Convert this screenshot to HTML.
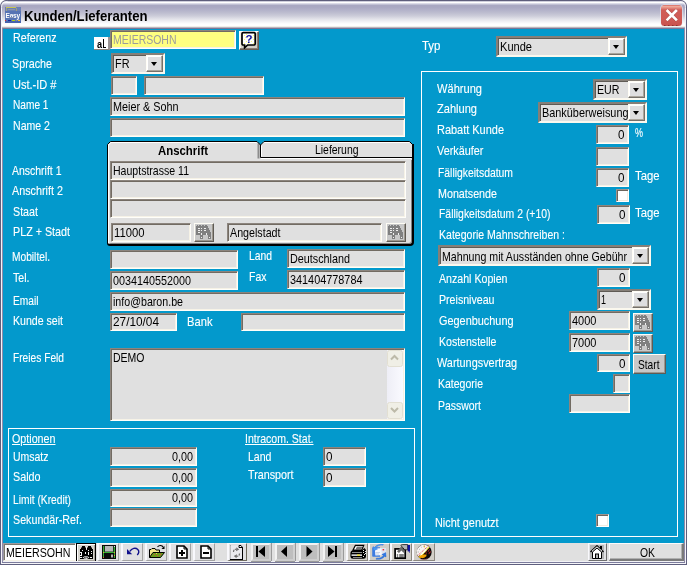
<!DOCTYPE html><html><head><meta charset="utf-8"><title>Kunden/Lieferanten</title><style>
html,body{margin:0;padding:0;}
body{width:687px;height:565px;overflow:hidden;background:#fff;font-family:"Liberation Sans",sans-serif;font-size:13px;position:relative;}
.a{position:absolute;}
.t{position:absolute;white-space:nowrap;line-height:14px;height:14px;transform-origin:0 0;color:#fff;-webkit-text-stroke:0.12px #fff;}
.k{color:#000;-webkit-text-stroke:0;}
.f{position:absolute;box-sizing:border-box;background:#e0e0e0;border-style:solid;border-width:1px;border-color:#8c857e #fffefa #fffefa #8c857e;box-shadow:inset 1px 1px 0 #726b62, inset -1px -1px 0 #f6f2e6;}
.c{position:absolute;box-sizing:border-box;background:#e0e0e0;border-style:solid;border-width:2px;border-color:#857f78 #fbf8ee #fbf8ee #857f78;box-shadow:inset 1px 1px 0 #5f5b55;}
.db{position:absolute;box-sizing:border-box;background:#dededf;border-style:solid;border-width:1px;border-color:#fffdf5 #74706a #74706a #fffdf5;box-shadow:inset -1px -1px 0 #aaa59c, inset 1px 1px 0 #fff;}
.db:after{content:"";position:absolute;left:50%;top:50%;margin:-1.5px 0 0 -3.5px;border-style:solid;border-color:#000 transparent transparent transparent;border-width:4px 3.5px 0 3.5px;}
.btn{position:absolute;box-sizing:border-box;background:#e0e0e0;border-style:solid;border-width:1px;border-color:#fffdf5 #5f5b55 #5f5b55 #fffdf5;box-shadow:inset -1px -1px 0 #9c978e;}
.gb{position:absolute;box-sizing:border-box;border:1px solid #fff;}
.tb{position:absolute;box-sizing:border-box;top:543px;height:18px;background:#e0e0e2;border-style:solid;border-width:1px 1px 1px 2px;border-color:#f8f8fa #a2a2a2 #a2a2a2 #f8f8fc;}
.nv{position:absolute;box-sizing:border-box;top:543px;height:18px;width:20px;background:#bebebe;border-style:solid;border-width:2px 2px 2px 2px;border-color:#f2f2f2 #d0d0d0 #cdcdcd #f2f2f2;box-shadow:1px 0 0 #9a9a9a, 0 1px 0 #9a9a9a;}
</style></head><body><div id="w" style="position:absolute;left:0;top:0;width:687px;height:565px;will-change:transform;">
<div class="a" style="left:0;top:0;width:687px;height:565px;background:#f4f4f8;border-radius:8px 8px 0 0;"></div>
<div class="a" style="left:0;top:0;width:687px;height:29px;border-radius:8px 8px 0 0;background:linear-gradient(#5e5e7c 0,#5e5e7c 1px,#cfcfdc 1px,#cfcfdc 2px,#ffffff 2px,#ffffff 3px,#dcdce8 3.5px,#c0c0d4 4.5px,#a9a8c2 5.5px,#a9a8c2 7px,#b1b0c8 9.5px,#bebed0 13px,#cdcdda 16px,#e2e2e9 19px,#f4f4f7 22px,#ffffff 24px,#ffffff 26px,#f0eee8 26px,#f0eee8 27px,#b8b4c0 27px,#b8b4c0 28px,#7a7696 28px,#7a7696 29px);"></div>
<svg class="a" style="left:0;top:0" width="687" height="10" viewBox="0 0 687 10"><path d="M0.5 9 V7 Q0.5 0.5 7 0.5 M680 0.5 Q686.5 0.5 686.5 7 V9" fill="none" stroke="#5e5e7c" stroke-width="1"/><path d="M1.5 9 V7.5 Q1.5 1.6 7.5 1.6 M679.5 1.6 Q685.5 1.6 685.5 7.5 V9" fill="none" stroke="#f4f4fa" stroke-width="1"/></svg>
<div class="a" style="left:1px;top:8px;width:1px;height:21px;background:#f4f4fa;"></div>
<div class="a" style="left:685px;top:8px;width:1px;height:21px;background:#f4f4fa;"></div>
<div class="a" style="left:0;top:7px;width:1px;height:558px;background:#5f5f7e;"></div>
<div class="a" style="left:2px;top:28px;width:1px;height:535px;background:#8f8aa8;"></div>
<div class="a" style="left:686px;top:7px;width:1px;height:558px;background:#5f5f7e;"></div>
<div class="a" style="left:684px;top:28px;width:1px;height:535px;background:#8f8aa8;"></div>
<div class="a" style="left:0;top:564px;width:687px;height:1px;background:#5f5f7e;"></div>
<div class="a" style="left:2px;top:562px;width:683px;height:1px;background:#7c7c9c;"></div>
<div class="a" style="left:3px;top:29px;width:681px;height:514px;background:#0399cc;"></div>
<div class="a" style="left:3px;top:543px;width:681px;height:19px;background:#e0e0e0;"></div>
<div class="a" style="left:5px;top:7px;width:16px;height:16px;background:#5673b4;overflow:hidden;"><div class="a" style="left:0;top:0;width:16px;height:4px;background:#6a80b4;"></div><div class="a" style="left:1px;top:0;width:10px;height:1px;background:#c4c452;"></div><div class="a" style="left:1px;top:1px;width:1px;height:3px;background:#a0a080;"></div><div class="a" style="left:11px;top:1px;width:1px;height:3px;background:#a0a080;"></div><div class="a" style="left:3px;top:2px;width:7px;height:1px;background:#8c94a8;"></div><div class="a" style="left:0.5px;top:4.5px;font:bold 6.5px/7px 'Liberation Sans',sans-serif;color:#fff;letter-spacing:-0.2px;">Easy</div><div class="a" style="left:4px;top:10px;width:5px;height:1px;background:#8c98b4;"></div><div class="a" style="left:0;top:13px;width:1px;height:2px;background:#d82a2a;"></div><div class="a" style="left:3px;top:13px;width:3px;height:1px;background:#1428a4;"></div><div class="a" style="left:7px;top:13px;width:3px;height:1px;background:#b0d014;"></div><div class="a" style="left:11px;top:13px;width:1px;height:1px;background:#909090;"></div><div class="a" style="left:13px;top:13px;width:2px;height:1px;background:#f0c028;"></div><div class="a" style="left:0;top:14px;width:16px;height:2px;background:#4864ac;"></div></div>
<div class="t k" style="left:24.4px;top:7px;font-size:14.5px;line-height:18px;height:18px;transform:scaleX(0.9070);font-weight:bold;">Kunden/Lieferanten</div>
<div class="a" style="left:661px;top:5px;width:21px;height:21px;border-radius:3.5px;background:linear-gradient(#d8685f 0,#eea898 1.5px,#e58a7e 3px,#d05d57 5px,#cf5a55 14px,#c9514d 21px);box-sizing:border-box;box-shadow:0 0 0 0.6px rgba(236,236,246,.9);"><svg class="a" style="left:0;top:0" width="21" height="21" viewBox="0 0 21 21"><path d="M5.6 5 L15.9 15.4 M15.9 5 L5.6 15.4" stroke="#6a1c18" stroke-width="3.6" stroke-linecap="butt" opacity=".35"/><path d="M5.6 5 L15.9 15.4 M15.9 5 L5.6 15.4" stroke="#fff" stroke-width="2.7" stroke-linecap="butt"/><path d="M3 20.5 H18" stroke="#7a2a26" stroke-width="1" stroke-dasharray="1.5 2.5" opacity=".8"/></svg></div>
<div class="gb" style="left:8px;top:428px;width:407px;height:109px;"></div>
<div class="gb" style="left:421px;top:71px;width:257px;height:466px;"></div>
<div class="t " style="left:13.4px;top:31px;transform:scaleX(0.8246);">Referenz</div>
<div class="t " style="left:12.4px;top:57px;transform:scaleX(0.8261);">Sprache</div>
<div class="t " style="left:13.4px;top:78px;transform:scaleX(0.8480);">Ust.-ID #</div>
<div class="t " style="left:13.4px;top:98px;transform:scaleX(0.7797);">Name 1</div>
<div class="t " style="left:13.4px;top:119px;transform:scaleX(0.8126);">Name 2</div>
<div class="t " style="left:12.4px;top:164px;transform:scaleX(0.8059);">Anschrift 1</div>
<div class="t " style="left:12.4px;top:184px;transform:scaleX(0.8303);">Anschrift 2</div>
<div class="t " style="left:13.4px;top:205px;transform:scaleX(0.8235);">Staat</div>
<div class="t " style="left:13.4px;top:225px;transform:scaleX(0.8259);">PLZ + Stadt</div>
<div class="t " style="left:12.4px;top:250px;transform:scaleX(0.7848);">Mobiltel.</div>
<div class="t " style="left:13.4px;top:271px;transform:scaleX(0.8154);">Tel.</div>
<div class="t " style="left:13.4px;top:294px;transform:scaleX(0.7842);">Email</div>
<div class="t " style="left:13.4px;top:314px;transform:scaleX(0.8138);">Kunde seit</div>
<div class="t " style="left:13.4px;top:351px;transform:scaleX(0.7842);">Freies Feld</div>
<div class="t " style="left:249.4px;top:249px;transform:scaleX(0.7952);">Land</div>
<div class="t " style="left:249.4px;top:270px;transform:scaleX(0.8075);">Fax</div>
<div class="t " style="left:187.4px;top:315px;transform:scaleX(0.8603);">Bank</div>
<div class="t " style="left:13.4px;top:450px;transform:scaleX(0.8057);">Umsatz</div>
<div class="t " style="left:13.4px;top:470px;transform:scaleX(0.8271);">Saldo</div>
<div class="t " style="left:13.4px;top:493px;transform:scaleX(0.7871);">Limit (Kredit)</div>
<div class="t " style="left:13.4px;top:513px;transform:scaleX(0.8231);">Sekundär-Ref.</div>
<div class="t " style="left:248.4px;top:450px;transform:scaleX(0.8125);">Land</div>
<div class="t " style="left:248.4px;top:468px;transform:scaleX(0.8249);">Transport</div>
<div class="t " style="left:422.4px;top:39px;transform:scaleX(0.8823);">Typ</div>
<div class="t " style="left:437.4px;top:82px;transform:scaleX(0.8531);">Währung</div>
<div class="t " style="left:437.4px;top:102px;transform:scaleX(0.8513);">Zahlung</div>
<div class="t " style="left:437.4px;top:123px;transform:scaleX(0.8426);">Rabatt Kunde</div>
<div class="t " style="left:437.4px;top:144px;transform:scaleX(0.8355);">Verkäufer</div>
<div class="t " style="left:438.2px;top:166px;transform:scaleX(0.7984);">Fälligkeitsdatum</div>
<div class="t " style="left:438.2px;top:187px;transform:scaleX(0.8245);">Monatsende</div>
<div class="t " style="left:438.9px;top:207px;transform:scaleX(0.8016);">Fälligkeitsdatum 2 (+10)</div>
<div class="t " style="left:438.9px;top:228px;transform:scaleX(0.8109);">Kategorie Mahnschreiben :</div>
<div class="t " style="left:438.7px;top:272px;transform:scaleX(0.8170);">Anzahl Kopien</div>
<div class="t " style="left:438.9px;top:293px;transform:scaleX(0.8169);">Preisniveau</div>
<div class="t " style="left:438.9px;top:314px;transform:scaleX(0.8378);">Gegenbuchung</div>
<div class="t " style="left:438.9px;top:335px;transform:scaleX(0.8118);">Kostenstelle</div>
<div class="t " style="left:437.4px;top:356px;transform:scaleX(0.8367);">Wartungsvertrag</div>
<div class="t " style="left:438.2px;top:377px;transform:scaleX(0.8085);">Kategorie</div>
<div class="t " style="left:438.2px;top:399px;transform:scaleX(0.8042);">Passwort</div>
<div class="t " style="left:435.4px;top:516px;transform:scaleX(0.8369);">Nicht genutzt</div>
<div class="t " style="left:635.4px;top:126px;transform:scaleX(0.6919);">%</div>
<div class="t " style="left:635.4px;top:169px;transform:scaleX(0.8687);">Tage</div>
<div class="t " style="left:635.4px;top:206px;transform:scaleX(0.8687);">Tage</div>
<div class="t " style="left:12.4px;top:432px;transform:scaleX(0.8244);text-decoration:underline;text-underline-offset:1px;">Optionen</div>
<div class="t " style="left:245.4px;top:432px;transform:scaleX(0.8102);text-decoration:underline;text-underline-offset:1px;">Intracom. Stat.</div>
<div class="a" style="left:107px;top:159px;width:307px;height:87px;background:#e0e0e0;border:solid #000;border-width:0 2px 2px 1px;box-sizing:border-box;border-radius:0 0 4px 3px;box-shadow:inset 1px 0 0 #fff, inset -1px -1px 0 #808080;"></div>
<svg class="a" style="left:106px;top:140px" width="310" height="20" viewBox="106 140 310 20"><path d="M107.5 160 V144.5 L110.5 141.5 H257 L260.5 145 L264 141.5 H409.5 L413 145 V160 Z" fill="#e0e0e0"/><path d="M258.5 143.5 V158.5" stroke="#8c8c8c" stroke-width="2" fill="none"/><path d="M108.5 160 V145 L111 142.5 H256.5 M264.5 142.5 H409 M261.5 146 V156.5 M261 158.5 H411" stroke="#fff" stroke-width="1" fill="none"/><path d="M107.5 160 V144.5 L110.5 141.5 H257 L260.5 145 L264 141.5 H409.5 L412.5 144.5" stroke="#000" stroke-width="1" fill="none"/><path d="M413 144 V160" stroke="#000" stroke-width="2" fill="none"/><path d="M260.5 145 V157.5 H412" stroke="#000" stroke-width="1" fill="none"/></svg>
<div class="t k" style="left:158.4px;top:144px;transform:scaleX(0.8762);font-weight:bold;">Anschrift</div>
<div class="t k" style="left:315.4px;top:143px;transform:scaleX(0.8023);">Lieferung</div>
<div class="f" style="left:111px;top:76px;width:26px;height:19px;"></div>
<div class="f" style="left:144px;top:76px;width:120px;height:19px;"></div>
<div class="f" style="left:110px;top:97px;width:295px;height:19px;"></div>
<div class="t k" style="left:113.4px;top:100px;transform:scaleX(0.8316);">Meier &amp; Sohn</div>
<div class="f" style="left:110px;top:118px;width:295px;height:19px;"></div>
<div class="f" style="left:110px;top:161px;width:296px;height:19px;"></div>
<div class="t k" style="left:113.4px;top:164px;transform:scaleX(0.8111);">Hauptstrasse 11</div>
<div class="f" style="left:110px;top:180px;width:296px;height:19px;"></div>
<div class="f" style="left:110px;top:199px;width:296px;height:19px;"></div>
<div class="f" style="left:111px;top:223px;width:80px;height:19px;"></div>
<div class="t k" style="left:114.4px;top:226px;transform:scaleX(0.8668);">11000</div>
<div class="f" style="left:227px;top:223px;width:155px;height:19px;"></div>
<div class="t k" style="left:230.4px;top:226px;transform:scaleX(0.8220);">Angelstadt</div>
<div class="f" style="left:110px;top:250px;width:128px;height:19px;"></div>
<div class="f" style="left:287px;top:249px;width:118px;height:19px;"></div>
<div class="t k" style="left:290.4px;top:252px;transform:scaleX(0.8301);">Deutschland</div>
<div class="f" style="left:110px;top:271px;width:128px;height:19px;"></div>
<div class="t k" style="left:113.4px;top:274px;transform:scaleX(0.8298);">0034140552000</div>
<div class="f" style="left:287px;top:270px;width:118px;height:19px;"></div>
<div class="t k" style="left:290.4px;top:273px;transform:scaleX(0.8356);">341404778784</div>
<div class="f" style="left:110px;top:292px;width:295px;height:19px;"></div>
<div class="t k" style="left:113.4px;top:295px;transform:scaleX(0.8189);">info@baron.be</div>
<div class="f" style="left:110px;top:313px;width:67px;height:18px;"></div>
<div class="t k" style="left:113.4px;top:315px;transform:scaleX(0.9089);">27/10/04</div>
<div class="f" style="left:241px;top:313px;width:164px;height:18px;"></div>
<div class="f" style="left:110px;top:447px;width:87px;height:19px;"></div>
<div class="t k" style="left:171.9px;top:450px;transform:scaleX(0.8296);">0,00</div>
<div class="f" style="left:110px;top:468px;width:87px;height:19px;"></div>
<div class="t k" style="left:171.9px;top:470.5px;transform:scaleX(0.8296);">0,00</div>
<div class="f" style="left:110px;top:489px;width:87px;height:18px;"></div>
<div class="t k" style="left:171.9px;top:491px;transform:scaleX(0.8296);">0,00</div>
<div class="f" style="left:110px;top:508px;width:87px;height:19px;"></div>
<div class="f" style="left:323px;top:447px;width:43px;height:19px;"></div>
<div class="t k" style="left:326.4px;top:450px;transform:scaleX(0.8985);">0</div>
<div class="f" style="left:323px;top:468px;width:43px;height:19px;"></div>
<div class="t k" style="left:326.4px;top:471px;transform:scaleX(0.8985);">0</div>
<div class="f" style="left:596px;top:125px;width:33px;height:19px;"></div>
<div class="t k" style="left:618.4px;top:127.5px;transform:scaleX(0.8985);">0</div>
<div class="f" style="left:596px;top:147px;width:33px;height:19px;"></div>
<div class="f" style="left:596px;top:168px;width:33px;height:19px;"></div>
<div class="t k" style="left:618.4px;top:170.5px;transform:scaleX(0.8985);">0</div>
<div class="f" style="left:597px;top:205px;width:33px;height:19px;"></div>
<div class="t k" style="left:619.4px;top:207.5px;transform:scaleX(0.8985);">0</div>
<div class="f" style="left:597px;top:268px;width:33px;height:19px;"></div>
<div class="t k" style="left:619.4px;top:270.5px;transform:scaleX(0.8985);">0</div>
<div class="f" style="left:569px;top:311px;width:61px;height:19px;"></div>
<div class="t k" style="left:572.4px;top:313.5px;transform:scaleX(0.8471);">4000</div>
<div class="f" style="left:569px;top:333px;width:61px;height:19px;"></div>
<div class="t k" style="left:572.4px;top:335.5px;transform:scaleX(0.8471);">7000</div>
<div class="f" style="left:597px;top:354px;width:33px;height:18px;"></div>
<div class="t k" style="left:619.4px;top:356.5px;transform:scaleX(0.8985);">0</div>
<div class="f" style="left:613px;top:374px;width:17px;height:19px;"></div>
<div class="f" style="left:569px;top:394px;width:61px;height:19px;"></div>
<div class="f" style="left:110px;top:30px;width:126px;height:19px;background:#ffff80;"></div>
<div class="t k" style="left:113.4px;top:33px;transform:scaleX(0.8065);color:#9c9c9c;">MEIERSOHN</div>
<div class="a" style="left:94px;top:37px;width:16px;height:13px;background:#fff;box-sizing:border-box;border-style:solid;border-width:0 2px 1px 0;border-color:#9a9494 #9a9494 #8c8278 #9a9494;"></div>
<div class="t k" style="left:96.6px;top:37px;font-size:10.5px;transform:scaleX(0.8727);font-weight:bold;">a</div>
<div class="a" style="left:103px;top:39px;width:1px;height:9px;background:#000;"></div>
<div class="a" style="left:104px;top:47px;width:2px;height:1px;background:#000;"></div>
<div class="btn" style="left:239px;top:31px;width:20px;height:19px;background:#d4d0c8;border-color:#fff #6a5c54 #6a5c54 #fff;box-shadow:inset -1px -1px 0 #8c8078, inset 1px 1px 0 #f4f0e8;"></div>
<svg class="a" style="left:241px;top:31px" width="16" height="18" viewBox="0 0 16 18"><path d="M2.2 1.6 H13 Q14.2 1.6 14.2 2.8 V12.8 Q14.2 14 13 14 H6.6 L3.6 16.8 L3.6 14 H2.2 Q1 14 1 12.8 V2.8 Q1 1.6 2.2 1.6 Z" fill="#fff" stroke="#000" stroke-width="1.7"/><path d="M3 4h1v1h-1zM3 8h1v1h-1zM3 12h1v1h-1zM5 3h1v1h-1zM5 10h1v1h-1zM12 4h1v1h-1zM12 8h1v1h-1zM12 12h1v1h-1zM10 10h1v1h-1zM7 12h1v1h-1zM4 6h1v1h-1zM11 6h1v1h-1z" fill="#ffff70"/><text x="8" y="12" font-family="Liberation Sans" font-weight="bold" font-size="11.5" text-anchor="middle" fill="#10109c">?</text></svg>
<div class="c" style="left:111px;top:53px;width:54px;height:21px;"></div>
<div class="db" style="left:146px;top:55px;width:17px;height:17px;"></div>
<div class="t k" style="left:114.9px;top:57px;transform:scaleX(0.8360);">FR</div>
<div class="c" style="left:496px;top:36px;width:131px;height:21px;"></div>
<div class="db" style="left:608px;top:38px;width:17px;height:17px;"></div>
<div class="t k" style="left:499.9px;top:40px;transform:scaleX(0.8512);">Kunde</div>
<div class="c" style="left:593px;top:79px;width:54px;height:21px;"></div>
<div class="db" style="left:628px;top:81px;width:17px;height:17px;"></div>
<div class="t k" style="left:596.9px;top:83px;transform:scaleX(0.8196);">EUR</div>
<div class="c" style="left:538px;top:102px;width:109px;height:21px;"></div>
<div class="db" style="left:628px;top:104px;width:17px;height:17px;"></div>
<div class="t k" style="left:541.9px;top:106px;transform:scaleX(0.8369);">Banküberweisung</div>
<div class="c" style="left:438px;top:245px;width:213px;height:21px;"></div>
<div class="db" style="left:632px;top:247px;width:17px;height:17px;"></div>
<div class="t k" style="left:441.9px;top:249.5px;transform:scaleX(0.8178);">Mahnung mit Ausständen ohne Gebühr</div>
<div class="c" style="left:597px;top:289px;width:54px;height:21px;"></div>
<div class="db" style="left:632px;top:291px;width:17px;height:17px;"></div>
<div class="t k" style="left:600.9px;top:293px;transform:scaleX(0.6911);">1</div>
<div class="a" style="left:616px;top:189px;width:13px;height:13px;background:#fff;box-sizing:border-box;border-style:solid;border-width:1px;border-color:#a0948e #fff #fff #a0948e;box-shadow:inset 1px 1px 0 #6e665e, inset -1px -1px 0 #f0ece0;"></div>
<div class="a" style="left:596px;top:514px;width:13px;height:13px;background:#fff;box-sizing:border-box;border-style:solid;border-width:1px;border-color:#a0948e #fff #fff #a0948e;box-shadow:inset 1px 1px 0 #6e665e, inset -1px -1px 0 #f0ece0;"></div>
<div class="btn" style="left:194px;top:223px;width:20px;height:19px;background:#c8c8c8;"></div>
<svg class="a" style="left:194px;top:223px" width="20" height="19" viewBox="0 0 20 19"><path d="M2 3h1v-1h1v1h1v-1h2v1h1v-1h2v1h1v-1h2v1h1v9h-12z" fill="#808080"/><path d="M4 5h2v1h-2zM4 7h2v1h-2zM4 9h2v1h-2zM7 5h1v1h-1zM7 7h1v1h-1zM10 5h2v1h-2zM10 7h2v1h-2z" fill="#f0f0f0"/><path d="M8 5h2v3h4v-3h1v2h1v2h1v7h-3v-4h-5v4h-3v-7h2z" fill="#808080"/><path d="M7 10h1v2h-1zM12 10h1v2h-1zM7 14h1v1h-1zM15 14h1v1h-1z" fill="#f0f0f0"/></svg>
<div class="btn" style="left:386px;top:223px;width:20px;height:19px;background:#c8c8c8;"></div>
<svg class="a" style="left:386px;top:223px" width="20" height="19" viewBox="0 0 20 19"><path d="M2 3h1v-1h1v1h1v-1h2v1h1v-1h2v1h1v-1h2v1h1v9h-12z" fill="#808080"/><path d="M4 5h2v1h-2zM4 7h2v1h-2zM4 9h2v1h-2zM7 5h1v1h-1zM7 7h1v1h-1zM10 5h2v1h-2zM10 7h2v1h-2z" fill="#f0f0f0"/><path d="M8 5h2v3h4v-3h1v2h1v2h1v7h-3v-4h-5v4h-3v-7h2z" fill="#808080"/><path d="M7 10h1v2h-1zM12 10h1v2h-1zM7 14h1v1h-1zM15 14h1v1h-1z" fill="#f0f0f0"/></svg>
<div class="btn" style="left:633px;top:313px;width:20px;height:19px;background:#c8c8c8;"></div>
<svg class="a" style="left:633px;top:313px" width="20" height="19" viewBox="0 0 20 19"><path d="M2 3h1v-1h1v1h1v-1h2v1h1v-1h2v1h1v-1h2v1h1v9h-12z" fill="#808080"/><path d="M4 5h2v1h-2zM4 7h2v1h-2zM4 9h2v1h-2zM7 5h1v1h-1zM7 7h1v1h-1zM10 5h2v1h-2zM10 7h2v1h-2z" fill="#f0f0f0"/><path d="M8 5h2v3h4v-3h1v2h1v2h1v7h-3v-4h-5v4h-3v-7h2z" fill="#808080"/><path d="M7 10h1v2h-1zM12 10h1v2h-1zM7 14h1v1h-1zM15 14h1v1h-1z" fill="#f0f0f0"/></svg>
<div class="btn" style="left:633px;top:334px;width:20px;height:19px;background:#c8c8c8;"></div>
<svg class="a" style="left:633px;top:334px" width="20" height="19" viewBox="0 0 20 19"><path d="M2 3h1v-1h1v1h1v-1h2v1h1v-1h2v1h1v-1h2v1h1v9h-12z" fill="#808080"/><path d="M4 5h2v1h-2zM4 7h2v1h-2zM4 9h2v1h-2zM7 5h1v1h-1zM7 7h1v1h-1zM10 5h2v1h-2zM10 7h2v1h-2z" fill="#f0f0f0"/><path d="M8 5h2v3h4v-3h1v2h1v2h1v7h-3v-4h-5v4h-3v-7h2z" fill="#808080"/><path d="M7 10h1v2h-1zM12 10h1v2h-1zM7 14h1v1h-1zM15 14h1v1h-1z" fill="#f0f0f0"/></svg>
<div class="btn" style="left:633px;top:354px;width:33px;height:20px;background:#c8c8c8;"></div>
<div class="t k" style="left:638.4px;top:358px;transform:scaleX(0.7827);">Start</div>
<div class="f" style="left:110px;top:348px;width:295px;height:73px;"></div>
<div class="t k" style="left:112.9px;top:351px;transform:scaleX(0.8077);">DEMO</div>
<div class="a" style="left:387px;top:350px;width:16px;height:69px;background:linear-gradient(90deg,#eeeef6,#fafaff);"></div>
<svg class="a" style="left:387px;top:350px" width="16" height="17" viewBox="0 0 16 17"><rect x="0.5" y="0.5" width="15" height="16" rx="2" fill="#f0efe6" stroke="#e2dfd2"/><path d="M4 9.5 L7.5 6 L11 9.5" fill="none" stroke="#bdbaa9" stroke-width="2"/></svg>
<svg class="a" style="left:387px;top:402px" width="16" height="17" viewBox="0 0 16 17"><rect x="0.5" y="0.5" width="15" height="16" rx="2" fill="#f0efe6" stroke="#e2dfd2"/><path d="M4 6 L7.5 9.5 L11 6" fill="none" stroke="#bdbaa9" stroke-width="2"/></svg>
<div class="a" style="left:3px;top:543px;width:73px;height:18px;background:#fff;box-sizing:border-box;border-style:solid;border-width:1px;border-color:#9c9ca2 #fffefa #f4f0e4 #9c9ca2;box-shadow:inset 1px 1px 0 #7c786e;"></div>
<div class="t k" style="left:6.4px;top:546px;transform:scaleX(0.8192);">MEIERSOHN</div>
<div class="a" style="left:76px;top:543px;width:20px;height:19px;background:#d6d4ce;border:1px solid #000;box-sizing:border-box;box-shadow:inset 1px 1px 0 #fff, inset -1px -1px 0 #a8a49c;"></div>
<svg class="a" style="left:76px;top:543px" width="20" height="19" viewBox="0 0 20 19"><path d="M6 3h3v1.5h1v2.5h1v-2.5h1v-1.5h3v1.5h1v1.5h1v10h-6v-2h-1v2h-6v-10h1v-1.5h1z" fill="#000"/><path d="M6 7h1v1h-1zM12 7h1v1h-1zM9 9h1v2h-1zM12 9h1v3h-1zM4 9h2v1h-2zM5 10h1v2h-1zM4 12h2v1h-2zM15 8h1v1h-1zM15 10h1v1h-1zM4 14h2v1h-2zM14 14h2v1h-2zM10 4h1v2h-1z" fill="#f4f4f4"/><path d="M6.5 14.5 L8.5 13.3 H11.5 L13.5 14.5 L11.5 15.7 H8.5 Z" fill="#d8d8d8"/><rect x="8.4" y="14" width="1" height="1" fill="#000"/><rect x="10.6" y="14" width="1" height="1" fill="#000"/></svg>
<div class="a" style="left:3px;top:561px;width:681px;height:1px;background:#f2f2f6;"></div>
<div class="tb" style="left:97px;width:22px;"></div>
<div class="tb" style="left:121px;width:22px;"></div>
<div class="tb" style="left:145px;width:22px;"></div>
<div class="tb" style="left:169px;width:22px;"></div>
<div class="tb" style="left:193px;width:22px;"></div>
<div class="tb" style="left:227px;width:20px;border-right-color:#6e6a5e;border-bottom-color:#6e6a5e;"></div>
<div class="tb" style="left:346px;width:22px;background:#d2cfc8;border-right-color:#8a867e;border-bottom-color:#8a867e;"></div>
<div class="tb" style="left:368px;width:22px;background:#d2cfc8;border-right-color:#8a867e;border-bottom-color:#8a867e;"></div>
<div class="tb" style="left:390px;width:22px;background:#d2cfc8;border-right-color:#8a867e;border-bottom-color:#8a867e;"></div>
<div class="tb" style="left:412px;width:23px;background:#d2cfc8;border-right-color:#8a867e;border-bottom-color:#8a867e;"></div>
<svg class="a" style="left:102px;top:545px" width="14" height="14" viewBox="0 0 14 14"><rect x="0" y="0" width="14" height="14" fill="#0a0a0a"/><rect x="1" y="1" width="12" height="12" fill="#1c3a1c"/><rect x="3" y="1" width="8" height="5.5" fill="#b8b8b8"/><rect x="1" y="1" width="1" height="12" fill="#34b034"/><rect x="12" y="2" width="1" height="11" fill="#34b034"/><rect x="1" y="7" width="12" height="1" fill="#34b034"/><rect x="2" y="8" width="10" height="5" fill="#0a0a0a"/><rect x="9" y="9.5" width="2" height="3" fill="#b4b4b4"/><rect x="1" y="7" width="1" height="1" fill="#e0a030"/><rect x="12" y="7" width="1" height="1" fill="#e0a030"/><rect x="1" y="12" width="1" height="1" fill="#e06030"/><rect x="12" y="10" width="1" height="1" fill="#e0a030"/><rect x="12" y="1" width="1" height="1" fill="#d8d8d8"/></svg>
<svg class="a" style="left:125px;top:545px" width="17" height="14" viewBox="0 0 17 14"><path d="M2 4 L2 9.2 L7.2 9.2 Z" fill="#10108c"/><path d="M4.8 6.4 C6.8 3 10.6 2.4 12.8 4.4 C14.4 6 14 8.4 12.2 10" fill="none" stroke="#10108c" stroke-width="1.4"/></svg>
<svg class="a" style="left:148px;top:544px" width="18" height="15" viewBox="0 0 18 15"><path d="M9.5 3 C11 1 14 1 15.5 3.5" fill="none" stroke="#000" stroke-width="1.1"/><path d="M16.5 2 L16.5 5 L13.5 5 Z" fill="#000"/><path d="M1.5 13.5 V5.5 H3 L4 4.5 H7 L8 6 H11.5 V8" fill="#f4e68c" stroke="#000" stroke-width="1"/><path d="M1.5 13.5 L5 8.5 H16.5 L12.5 13.5 Z" fill="#6c9c1c" stroke="#000" stroke-width="1"/><rect x="6" y="10" width="1" height="1" fill="#e04040"/><rect x="9" y="11" width="1" height="1" fill="#e04040"/><rect x="12" y="10" width="1" height="1" fill="#e04040"/><rect x="8" y="9" width="1" height="1" fill="#e8d040"/></svg>
<svg class="a" style="left:176px;top:545px" width="12" height="14" viewBox="0 0 12 14"><path d="M1 1 H8 L11 4 V13 H1 Z" fill="#fff" stroke="#000" stroke-width="1.6"/><path d="M8 1 V4 H11" fill="none" stroke="#000" stroke-width="1"/><path d="M3 8 H9 M6 5 V11" stroke="#000" stroke-width="2"/></svg>
<svg class="a" style="left:200px;top:545px" width="12" height="14" viewBox="0 0 12 14"><path d="M1 1 H8 L11 4 V13 H1 Z" fill="#fff" stroke="#000" stroke-width="1.6"/><path d="M8 1 V4 H11" fill="none" stroke="#000" stroke-width="1"/><path d="M3 8 H9" stroke="#000" stroke-width="2"/></svg>
<svg class="a" style="left:229px;top:544px" width="16" height="17" viewBox="0 0 16 17"><path d="M1.5 1 V15" stroke="#909090" stroke-width="1"/><path d="M1.5 1.5 H10 L13.5 4 V15.5 H1.5 Z" fill="#eaeaee" stroke="none"/><path d="M1 15.5 H14 M13.5 3 V16" stroke="#000" stroke-width="1"/><path d="M10 3.5 V1.5 H12 L13.5 3.5 Z" fill="#fff" stroke="#000" stroke-width="1"/><path d="M4.5 8 C4.5 5.5 6.5 4.8 8.5 5.2 M10.5 9.5 C10.5 12 8.5 12.6 6.5 12.2" fill="none" stroke="#707070" stroke-width="1.2" stroke-dasharray="2 0.8"/><path d="M7.5 3.2 L10.2 5.5 L7 7.2 Z M7.5 14.2 L4.8 11.9 L8 10.2 Z" fill="#707070"/></svg>
<div class="nv" style="left:251px;"></div>
<svg class="a" style="left:251px;top:543px" width="20" height="19" viewBox="0 0 20 19"><rect x="5" y="3" width="2" height="11" fill="#000"/><path d="M14 3 V14 L7.5 8.5 Z" fill="#000"/></svg>
<div class="nv" style="left:275px;"></div>
<svg class="a" style="left:275px;top:543px" width="20" height="19" viewBox="0 0 20 19"><path d="M12 3 V14 L6 8.5 Z" fill="#000"/></svg>
<div class="nv" style="left:299px;"></div>
<svg class="a" style="left:299px;top:543px" width="20" height="19" viewBox="0 0 20 19"><path d="M7.5 3 V14 L13.5 8.5 Z" fill="#000"/></svg>
<div class="nv" style="left:323px;"></div>
<svg class="a" style="left:323px;top:543px" width="20" height="19" viewBox="0 0 20 19"><path d="M5 3 V14 L11.5 8.5 Z" fill="#000"/><rect x="12" y="3" width="2" height="11" fill="#000"/></svg>
<svg class="a" style="left:346px;top:541px" width="90" height="22" viewBox="346 541 90 22"><path d="M353 550 L355.4 545.4 H363.7 L361.7 550 Z" fill="#fff" stroke="#000" stroke-width="1.2"/><path d="M356.5 547.2 H362 M356 548.8 H361.4" stroke="#000" stroke-width="0.8"/><path d="M350.4 553.5 Q350.4 550 354 550 H362 L364.5 548 L366 550 V556.5 Q366 558.7 363.5 558.7 H353 Q350.4 558.7 350.4 556.5 Z" fill="#000"/><rect x="352" y="552" width="10" height="0.9" fill="#9a9a9a"/><rect x="351.5" y="554.3" width="10.5" height="1.7" fill="#d2d2d2"/><rect x="357" y="554.5" width="3" height="1.3" fill="#f4e020"/><rect x="353" y="557.2" width="9" height="0.8" fill="#a8a8a8"/><path d="M363 550h1v1h-1zM365 551h1v1h-1zM363 552h1v1h-1zM364 554h1v1h-1zM363 556h1v1h-1zM365 553h1v1h-1z" fill="#e8e8e8"/><path d="M372.2 548 Q372.2 547.2 373 547.2 H380 V556.8 H373 Q372.2 556.8 372.2 556 Z" fill="#3f7ce0"/><path d="M374.8 548.6 L386 548 L386.2 555 L375.4 555.6 Z" fill="#f6f8fe"/><path d="M381 548.3 L386 548 L386.2 555 L382 555.3 Z" fill="#dfe3ee"/><rect x="382.6" y="549" width="1.5" height="1.4" fill="#e43434"/><path d="M375.5 552.5 H380 M376 554 H379" stroke="#b8c4dc" stroke-width="0.7"/><path d="M383 545.2 C380 544.6 377 546 375.6 548 L377.6 549 L373.4 551 L373 546.6 L374.6 547.4 C376 545.2 379.6 543.8 383.6 544.6 Z" fill="#4a9cf4" stroke="#2a70e0" stroke-width="0.4"/><path d="M376.4 558.2 C379.6 558.6 382.4 557.2 383.6 555.4 L381.8 554.6 L385.8 552.6 L386 557 L384.6 556.2 C383.2 558.6 379.8 559.8 376 559.2 Z" fill="#2f7ae8" stroke="#1a5cc8" stroke-width="0.4"/><rect x="395.1" y="548.9" width="10.1" height="9.3" fill="#fff" stroke="#000" stroke-width="1.7"/><path d="M396.8 555 H398.2 M399.2 555 H403.8 M396.8 557 H398.2 M399.2 557 H403.8" stroke="#000" stroke-width="1"/><path d="M397 551.6 L401.4 546.2 L405 551.8 L403.4 552.8 L401.4 550.4 L399 553 Z" fill="#6a6a6a"/><path d="M401 545.6 Q401 544.6 402.4 544.6 H407.6 V549.8 H404.6 Z" fill="#b4b4b4" stroke="#000" stroke-width="0.7"/><rect x="407.7" y="545" width="2.3" height="6.4" fill="#10109c"/><path d="M408.6 551.4 L410 551.4 L410 553 Z" fill="#10109c"/><circle cx="424.2" cy="552.1" r="7.5" fill="#0c0808"/><path d="M424.2 552.1 L429.6 546.9 A7.5 7.5 0 0 0 418.2 556.6 Z" fill="#f8f4f2"/><path d="M419 549 l1 .6 M421 546.6 l.6 1 M424.2 545.4 v1.6 M417.6 552 h1.4" stroke="#a0a0a0" stroke-width="0.7"/><rect x="423.8" y="545.6" width="0.9" height="1.8" fill="#f0a000"/><path d="M418.4 557 L428.6 546.4 L429.6 547.2 L420 558 Z" fill="#f8f050"/><path d="M420.6 555.4 L426.4 549.4" stroke="#fff" stroke-width="1.1"/><path d="M417.6 555.6 L429.4 545" stroke="#e03030" stroke-width="0.9" stroke-dasharray="1 1"/><path d="M418.6 556.6 Q421 559 424.6 557.6 Q427 556.6 426.6 554.6 L423 554.4 Z" fill="#f0a000"/><path d="M429.8 549.6 q-2 .4 -1.6 2.2 M431 551.8 q-2.4 .2 -2 2.4 M426.6 551.6 q-1.2 1 -.2 2.2" fill="none" stroke="#e03030" stroke-width="0.8"/><path d="M420 558.6 Q424 560.4 428.6 558" fill="none" stroke="#e05050" stroke-width="0.7" stroke-dasharray="1 1.2"/></svg>
<div class="tb" style="left:588px;width:19px;border-width:1px 1px 1px 1px;border-color:#f8f8fa #6e6e6e #6e6e6e #f8f8fc;"></div>
<svg class="a" style="left:590px;top:545px" width="15" height="15" viewBox="0 0 15 15"><rect x="0" y="0" width="14" height="14" fill="#b4b4b4"/><path d="M0.5 7 L7 0.8 L13.5 7" fill="none" stroke="#000" stroke-width="1.4"/><path d="M2 6.2 L7 1.8 L12 6.2" fill="none" stroke="#fff" stroke-width="1"/><rect x="10" y="1" width="2" height="3" fill="#000"/><path d="M2.5 7 V13.5 H11.5 V7 L7 3 Z" fill="#fff" stroke="#000" stroke-width="1"/><rect x="5.5" y="9" width="3" height="4.5" fill="#b4b4b4" stroke="#000" stroke-width="1"/></svg>
<div class="a" style="left:609px;top:543px;width:75px;height:18px;background:#e0e0e0;box-sizing:border-box;border-style:solid;border-width:1px 2px 2px 1px;border-color:#fbfbfb #7a7a7a #7a7a7a #fbfbfb;box-shadow:inset -1px -1px 0 #b0b0b0;"></div>
<div class="t k" style="left:639.9px;top:546px;transform:scaleX(0.7980);">OK</div>
</div></body></html>
